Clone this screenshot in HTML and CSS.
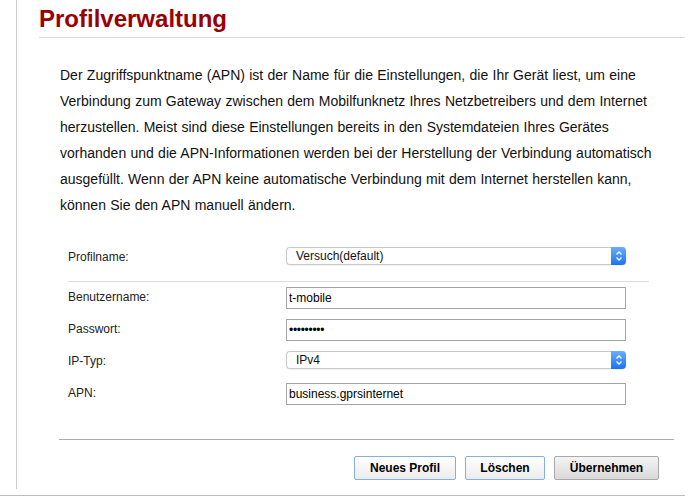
FILE: index.html
```html
<!DOCTYPE html>
<html lang="de">
<head>
<meta charset="utf-8">
<title>Profilverwaltung</title>
<link rel="stylesheet" href="styles.css">
</head>
<body>
<div class="page">
  <div class="content">
    <h1 class="title">Profilverwaltung</h1>
    <div class="main">
      <p class="intro">Der Zugriffspunktname (APN) ist der Name für die Einstellungen, die Ihr Gerät liest, um eine<br>Verbindung zum Gateway zwischen dem Mobilfunknetz Ihres Netzbetreibers und dem Internet<br>herzustellen. Meist sind diese Einstellungen bereits in den Systemdateien Ihres Gerätes<br>vorhanden und die APN-Informationen werden bei der Herstellung der Verbindung automatisch<br>ausgefüllt. Wenn der APN keine automatische Verbindung mit dem Internet herstellen kann,<br>können Sie den APN manuell ändern.</p>

      <div class="form">
        <div class="row row-profile">
          <label class="label">Profilname:</label>
          <div class="select">
            <span class="select-text">Versuch(default)</span>
            <span class="select-arrow"><svg width="8" height="12" viewBox="0 0 8 12"><path d="M1.5 4.5 L4 2 L6.5 4.5 M1.5 7.5 L4 10 L6.5 7.5" fill="none" stroke="#fff" stroke-width="1.3"/></svg></span>
          </div>
        </div>
        <div class="sep"></div>
        <div class="rows">
          <div class="row">
            <label class="label">Benutzername:</label>
            <input class="input" type="text" value="t-mobile">
          </div>
          <div class="row">
            <label class="label">Passwort:</label>
            <input class="input pw" type="text" value="•••••••••">
          </div>
          <div class="row">
            <label class="label">IP-Typ:</label>
            <div class="select">
              <span class="select-text">IPv4</span>
              <span class="select-arrow"><svg width="8" height="12" viewBox="0 0 8 12"><path d="M1.5 4.5 L4 2 L6.5 4.5 M1.5 7.5 L4 10 L6.5 7.5" fill="none" stroke="#fff" stroke-width="1.3"/></svg></span>
            </div>
          </div>
          <div class="row">
            <label class="label">APN:</label>
            <input class="input" type="text" value="business.gprsinternet">
          </div>
        </div>
      </div>

      <div class="actions">
        <button class="btn btn-blue w-neu">Neues Profil</button>
        <button class="btn btn-blue w-del">Löschen</button>
        <button class="btn btn-gray w-ok">Übernehmen</button>
      </div>
    </div>
  </div>
</div>
<div class="bottom-line"></div>
</body>
</html>
```

FILE: styles.css
```css
html, body {
  margin: 0;
  padding: 0;
  background: #fff;
}
body {
  font-family: "Liberation Sans", Arial, sans-serif;
  color: #111;
  width: 695px;
  height: 496px;
  overflow: hidden;
}
.page {
  margin-left: 16px;
  border-left: 1px solid #cfcfcf;
  height: 489px;
}
.content {
  padding-left: 22px;
  width: 646px;
}
.title {
  margin: 0;
  padding-top: 5px;
  padding-bottom: 4px;
  font-size: 24px;
  line-height: 28px;
  font-weight: bold;
  color: #990000;
  border-bottom: 1px solid #dcdcdc;
}
.main {
  margin-left: 20px;
  width: 615px;
}
.intro {
  margin: 24px 0 0 1px;
  font-size: 14px;
  line-height: 26px;
  word-spacing: 0.4px;
  white-space: nowrap;
  color: #111;
}
.form {
  margin-top: 29px;
  padding-left: 9px;
  width: 581px;
}
.row {
  display: flex;
  align-items: flex-start;
  height: 22px;
}
.row-profile {
  height: 18px;
}
.label {
  width: 218px;
  font-size: 12px;
  line-height: 18px;
  color: #222;
  padding-top: 1px;
}
.sep {
  margin-top: 16px;
  height: 1px;
  background: #dddddd;
}
.rows {
  margin-top: 5px;
  display: flex;
  flex-direction: column;
  gap: 10px;
}
.select {
  box-sizing: border-box;
  width: 340px;
  height: 18px;
  display: flex;
  align-items: stretch;
  border: 1px solid #c9c9c9;
  border-right: none;
  border-radius: 4px;
  background: #fff;
  box-shadow: 0 1px 1px rgba(0,0,0,0.06);
}
.select-text {
  flex: 1;
  padding-left: 9px;
  font-size: 12px;
  line-height: 16px;
  color: #111;
}
.select-arrow {
  width: 15px;
  margin: -1px 0;
  display: flex;
  align-items: center;
  justify-content: center;
  border-radius: 0 4px 4px 0;
  background: linear-gradient(#6aaefc, #1c74f2);
}
.input {
  box-sizing: border-box;
  width: 340px;
  height: 22px;
  margin: 0;
  padding: 0 2px;
  border: 1px solid #a3a3a3;
  border-radius: 0;
  font-family: "Liberation Sans", Arial, sans-serif;
  font-size: 12px;
  color: #000;
  background: #fff;
  outline: none;
}
.input.pw {
  font-size: 12px;
  letter-spacing: -0.3px;
}
.actions {
  margin-top: 34px;
  border-top: 1px solid #acacac;
  padding-top: 16px;
  padding-right: 15px;
  display: flex;
  justify-content: flex-end;
  gap: 9px;
}
.btn {
  box-sizing: border-box;
  height: 24px;
  margin: 0;
  padding: 0;
  font-family: "Liberation Sans", Arial, sans-serif;
  font-size: 12px;
  font-weight: bold;
  color: #000;
  border-radius: 2px;
  cursor: pointer;
}
.btn-blue {
  border: 1px solid #86afdc;
  background: linear-gradient(#ffffff, #ececec);
}
.btn-gray {
  border: 1px solid #a9a9a9;
  background: linear-gradient(#f4f4f4, #d9d9d9);
}
.w-neu { width: 102px; }
.w-del { width: 80px; }
.w-ok { width: 105px; }
.bottom-line {
  margin-top: 6px;
  width: 685px;
  height: 1px;
  background: #bdbdbd;
}
```
